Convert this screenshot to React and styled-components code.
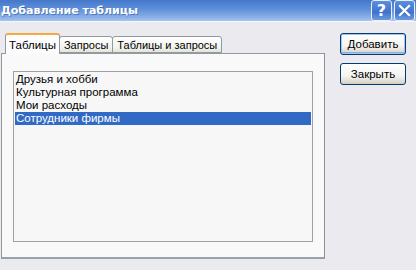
import React from "react";
import styled, { createGlobalStyle } from "styled-components";

const GlobalStyle = createGlobalStyle`
  html, body {
    margin: 0;
    padding: 0;
    background: #ebebef;
  }
  body {
    font-family: "Liberation Sans", Tahoma, sans-serif;
    font-size: 11px;
  }
`;

const tables = [
  "Друзья и хобби",
  "Культурная программа",
  "Мои расходы",
  "Сотрудники фирмы",
];

function Dialog() {
  const [tab, setTab] = React.useState(0);
  const [selected, setSelected] = React.useState(3);
  const tabs = ["Таблицы", "Запросы", "Таблицы и запросы"];

  return (
    <Window>
      <TitleBar>
        <Title>Добавление таблицы</Title>
        <Controls>
          <CaptionButton>?</CaptionButton>
          <CaptionButton>
            <svg width="13" height="13" viewBox="0 0 13 13">
              <path d="M2 2 L11 11 M11 2 L2 11" stroke="#fff" strokeWidth="2.2" strokeLinecap="square" />
            </svg>
          </CaptionButton>
        </Controls>
      </TitleBar>
      <Content>
        <TabArea>
          <TabStrip>
            {tabs.map((t, i) => (
              <Tab key={t} $active={i === tab} onClick={() => setTab(i)}>
                {t}
              </Tab>
            ))}
          </TabStrip>
          <Panel>
            <ListBox>
              {tables.map((t, i) => (
                <Row key={t} $selected={i === selected} onClick={() => setSelected(i)}>
                  {t}
                </Row>
              ))}
            </ListBox>
          </Panel>
        </TabArea>
        <Actions>
          <Button $default>Добавить</Button>
          <Button>Закрыть</Button>
        </Actions>
      </Content>
    </Window>
  );
}

const Window = styled.div`
  width: 416px;
  height: 270px;
  display: flex;
  flex-direction: column;
  background: #ebebef;
  overflow: hidden;
`;

const TitleBar = styled.div`
  height: 21px;
  display: flex;
  align-items: center;
  justify-content: space-between;
  background: linear-gradient(#4577cb 0%, #5f91da 45%, #8db2e6 85%, #a9c6ee 100%);
  border-bottom: 1px solid #f4f6fb;
`;

const Title = styled.span`
  color: #fff;
  font-family: "DejaVu Sans", "Liberation Sans", sans-serif;
  font-weight: bold;
  font-size: 11px;
  padding-left: 1px;
  text-shadow: 1px 1px 0 rgba(20, 50, 120, 0.4);
`;

const Controls = styled.div`
  display: flex;
  gap: 2px;
  padding-right: 1px;
  align-self: flex-start;
`;

const CaptionButton = styled.div`
  width: 19px;
  height: 19px;
  border: 1px solid #e8eefa;
  border-radius: 3px;
  background: linear-gradient(#5b8ede, #3f72cc 60%, #6d9be0);
  color: #fff;
  font-family: "DejaVu Sans", sans-serif;
  font-weight: bold;
  font-size: 16px;
  display: flex;
  align-items: center;
  justify-content: center;
`;

const Content = styled.div`
  flex: 1;
  display: flex;
  padding: 11px 0 0 1px;
`;

const TabArea = styled.div`
  width: 324px;
  display: flex;
  flex-direction: column;
`;

const TabStrip = styled.div`
  display: flex;
  align-items: flex-end;
  padding-left: 4px;
  height: 20px;
  position: relative;
  z-index: 1;
`;

const Tab = styled.div`
  height: ${(p) => (p.$active ? "21px" : "17px")};
  padding: 0 ${(p) => (p.$active ? "3px" : "4px")};
  margin-bottom: ${(p) => (p.$active ? "-1px" : "0")};
  margin-left: ${(p) => (p.$active ? "0" : "-1px")};
  display: flex;
  align-items: center;
  box-sizing: border-box;
  border: 1px solid #919b9c;
  border-bottom: ${(p) => (p.$active ? "none" : "1px solid #919b9c")};
  border-top: ${(p) => (p.$active ? "2px solid #f5a83b" : "1px solid #919b9c")};
  border-radius: 3px 3px 0 0;
  background: ${(p) =>
    p.$active ? "#fcfcfe" : "linear-gradient(#ffffff, #f3f3ef 70%, #e4e4de)"};
  color: #000;
  font-size: ${(p) => (p.$active ? "11.5px" : "11px")};
  white-space: nowrap;
  cursor: default;
  position: relative;
  z-index: ${(p) => (p.$active ? 2 : 1)};
`;

const Panel = styled.div`
  height: 206px;
  box-sizing: border-box;
  border: 1px solid #919b9c;
  border-right-color: #8a9294;
  border-bottom: 2px solid #9aa1ad;
  background: #f9f9f9;
  padding: 17px 11px 15px 11px;
`;

const ListBox = styled.div`
  height: 100%;
  box-sizing: border-box;
  border: 1px solid #a0a0a0;
  background: #f7f7f7;
  padding: 1px;
`;

const Row = styled.div`
  height: 13px;
  line-height: 13px;
  padding-left: 1px;
  font-size: 11.5px;
  color: ${(p) => (p.$selected ? "#fff" : "#000")};
  background: ${(p) => (p.$selected ? "#316ac5" : "transparent")};
  white-space: nowrap;
  cursor: default;
`;

const Actions = styled.div`
  display: flex;
  flex-direction: column;
  gap: 8px;
  margin-left: 15px;
`;

const Button = styled.button`
  width: 66px;
  height: 22px;
  box-sizing: border-box;
  border: 1px solid #003c74;
  border-radius: 3px;
  background: linear-gradient(#ffffff, #f4f4f0 60%, #d6d0c5);
  box-shadow: ${(p) =>
    p.$default ? "inset 0 0 0 1px #a7c5f0, inset 0 -1px 0 1px #8cb0e6" : "inset 0 -1px 0 #d6d0c5"};
  font-family: "Liberation Sans", Tahoma, sans-serif;
  font-size: 11.5px;
  color: #000;
  padding: 0;
`;

export default function App() {
  return (
    <>
      <GlobalStyle />
      <Dialog />
    </>
  );
}
